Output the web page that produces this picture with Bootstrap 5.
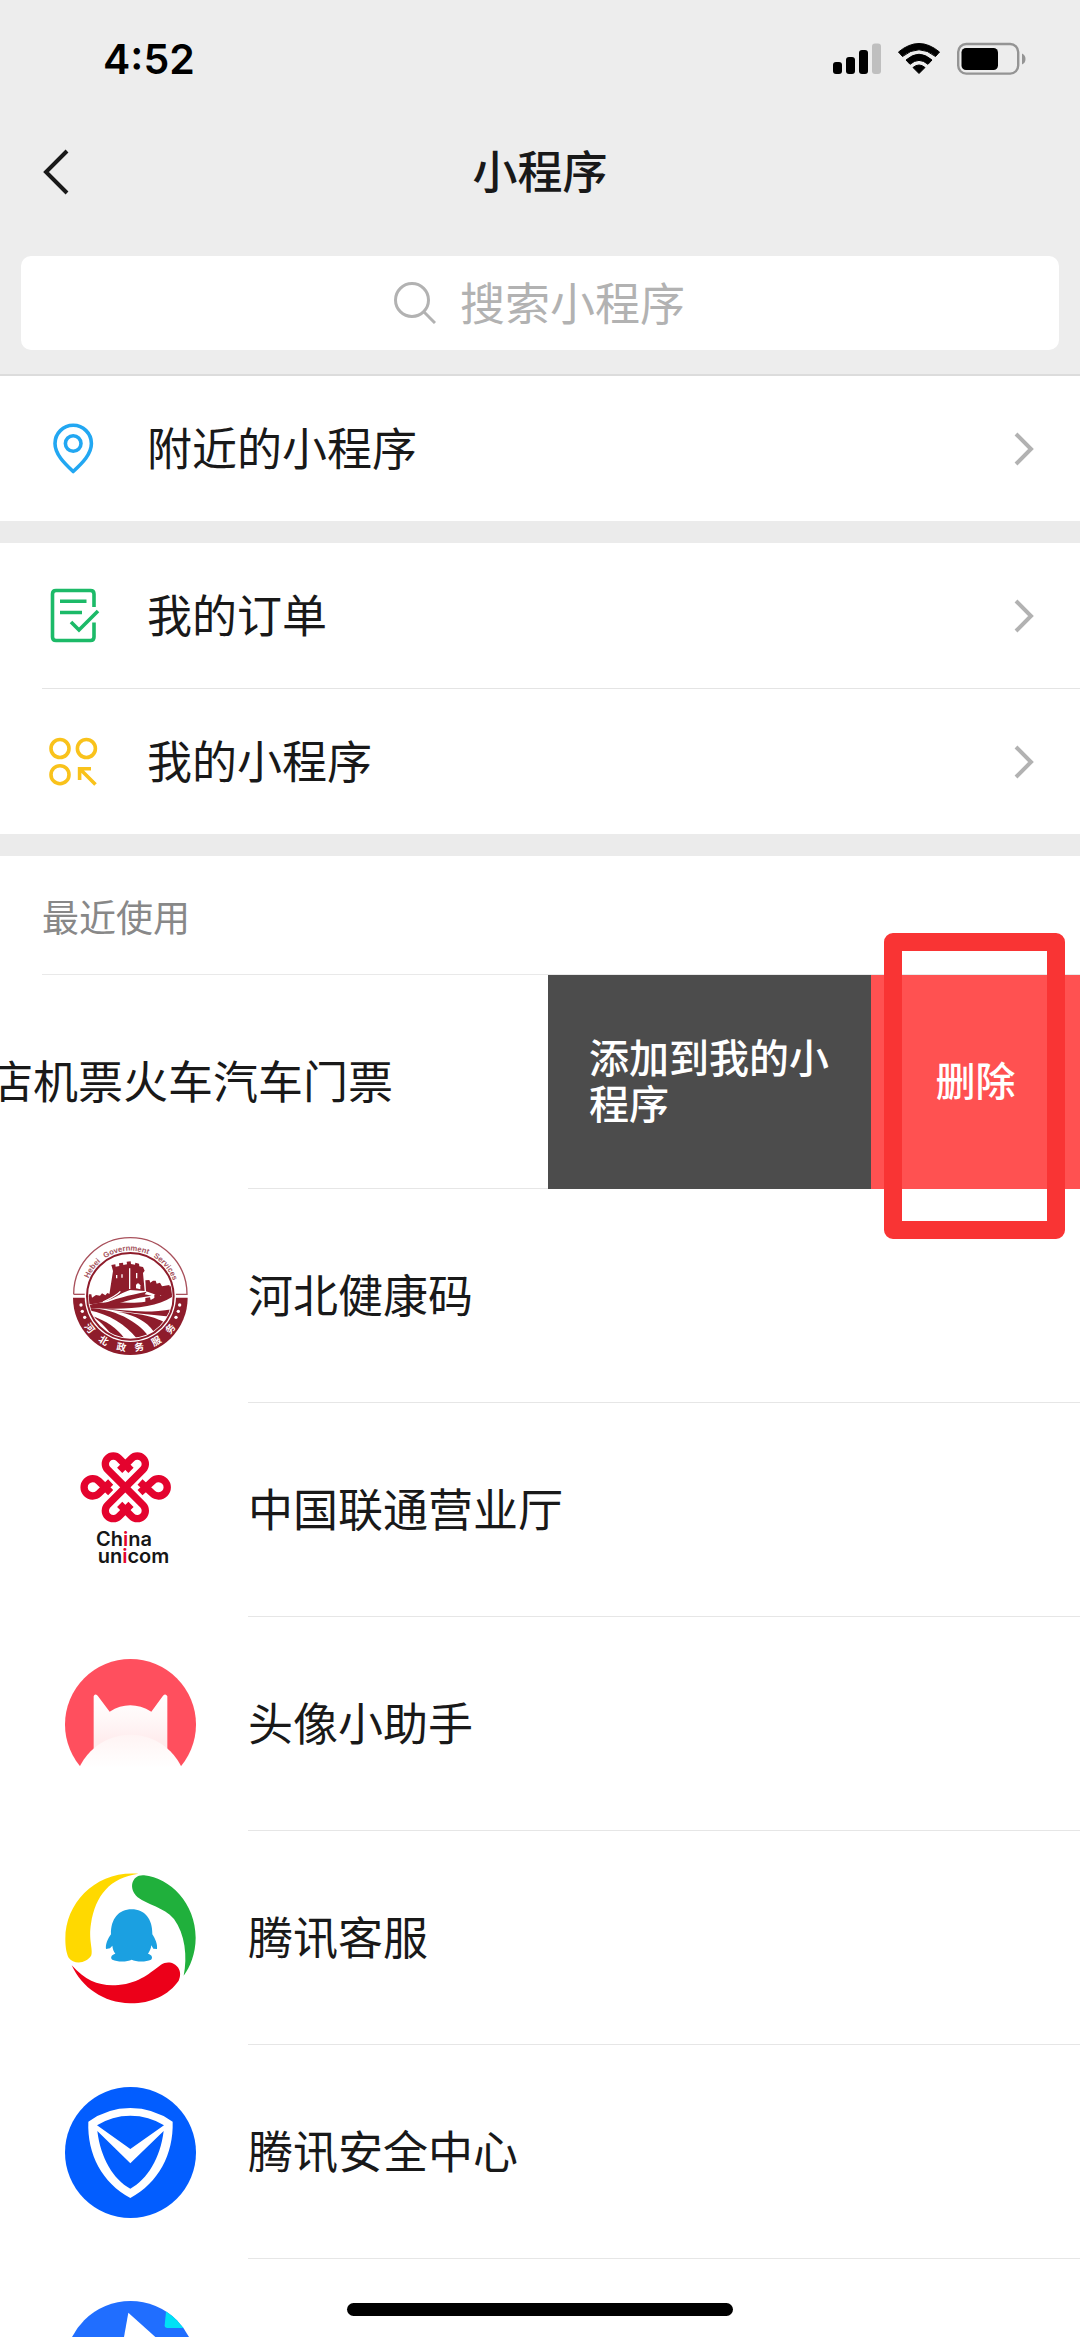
<!DOCTYPE html>
<html lang="zh-CN">
<head>
<meta charset="utf-8">
<meta name="viewport" content="width=device-width, initial-scale=1">
<title>小程序</title>
<link href="https://cdn.jsdelivr.net/npm/bootstrap@5.3.0/dist/css/bootstrap.min.css" rel="stylesheet">
<style>
  body { font-family: Inter, "Noto Sans CJK SC", sans-serif; font-size: 45px; line-height: 54px; color: #191919; background: #fff; }
  .screen { height: 100vh; }
  .top-area { background: #ededed; border-bottom: 2px solid #dcdcdc; height: 376px; }
  .status-bar { height: 118px; padding: 0 54px 0 103px; }
  .clock { font-size: 41px; font-weight: 600; color: #000; }
  .nav-row { height: 108px; padding-left: 42px; }
  .nav-row h1 { font-size: 45px; line-height: 54px; font-weight: 500; padding-top: 2px; }
  .search-wrap { padding: 30px 21px 0; }
  .search-box { height: 94px; border-radius: 10px; gap: 24px; cursor: text; }
  .search-box input { width: 226px; font-size: 45px; line-height: 54px; color: #191919; box-shadow: none; outline: 0; }
  .search-box input::placeholder { color: #b2b2b2; opacity: 1; }
  .menu-row { height: 145px; color: #191919; padding: 0 39px 0 42px; }
  .menu-row .menu-icon { width: 105px; }
  .menu-label, .app-name, .swipe-title { padding-top: 2px; }
  .menu-line { height: 1px; margin-left: 42px; background: #e4e4e4; }
  .band { height: 22px; background: #ebebeb; flex: none; }
  .recent-head { height: 119px; margin-left: 42px; padding-top: 8px; font-size: 37px; line-height: 44px; font-weight: 400; color: #888; border-bottom: 1px solid #e9e9e9; }
  .app-row { height: 214px; color: #191919; flex: none; }
  .app-icon { width: 248px; padding-left: 65px; flex: none; }
  .app-name { border-bottom: 1px solid #e6e6e6; }
  .swipe-title { padding-right: 155px; }
  .swipe-title::after { content: ""; position: absolute; left: 248px; right: 0; bottom: 0; border-bottom: 1px solid #e6e6e6; }
  .swipe-btn { border: 0; color: #fff; font-size: 40px; line-height: 46px; font-weight: 500; flex: none; }
  .btn-add { width: 323px; padding: 0 41px; background: #4c4c4c; }
  .btn-del { width: 209px; padding: 0; background: #ff5151; }
  .marker { right: 15px; top: -42px; width: 181px; height: 306px; border: 18px solid #f93434; border-radius: 9px; pointer-events: none; }
  .home-bar { left: 50%; bottom: 21px; width: 386px; height: 13px; margin-left: -193px; border-radius: 7px; background: #000; }
  svg { display: block; flex: none; }
</style>
</head>
<body>
<div class="screen d-flex flex-column overflow-hidden position-relative">
  <header class="top-area flex-shrink-0">
    <div class="status-bar d-flex align-items-center justify-content-between">
      <div class="clock">4:52</div>
      <svg width="194" height="34" viewBox="831 42 194 34" aria-hidden="true">
        <rect x="832" y="62" width="9" height="12" rx="3"/>
        <rect x="845" y="57" width="9" height="17" rx="3"/>
        <rect x="858" y="50" width="9" height="24" rx="3"/>
        <rect x="871" y="43.500" width="9" height="30.500" rx="3" fill="#bfbfbf"/>
        <path d="M897.500 52 Q918 35 938.500 52 L934.500 56.500 Q918 43 901.500 56.500 Z" stroke="#000" stroke-width="1" stroke-linejoin="round"/>
        <path d="M905 60 Q918 48.500 931 60 L927 64.300 Q918 56.500 909 64.300 Z" stroke="#000" stroke-width="1" stroke-linejoin="round"/>
        <path d="M912 67.500 Q918 62.500 924 67.500 L918 73.500 Z" stroke="#000" stroke-width="1" stroke-linejoin="round"/>
        <rect x="957.200" y="44" width="60" height="29.600" rx="8" fill="none" stroke="#949494" stroke-width="2.400"/>
        <rect x="960.500" y="48" width="36.500" height="22" rx="4.500"/>
        <path d="M1021 53.500 Q1024.500 55 1024.500 59 Q1024.500 63 1021 64.500 Z" fill="#949494"/>
      </svg>
    </div>
    <div class="nav-row d-flex align-items-center position-relative">
      <a href="#" aria-label="返回"><svg width="28" height="48" viewBox="0 0 28 48" fill="none" stroke="#191919" stroke-width="4"><path d="M25 3 L4 24 L25 45"/></svg></a>
      <h1 class="mb-0 position-absolute start-0 end-0 text-center pe-none">小程序</h1>
    </div>
    <div class="search-wrap">
      <label class="search-box bg-white d-flex align-items-center justify-content-center">
        <svg width="42" height="42" viewBox="0 0 42 42" fill="none" stroke="#b2b2b2" stroke-width="3"><circle cx="18" cy="18" r="16.500"/><path d="M29.500 29.500 L41 41"/></svg>
        <input class="border-0 px-0 pb-0 pt-1 bg-transparent" type="text" placeholder="搜索小程序" aria-label="搜索小程序">
      </label>
    </div>
  </header>

  <nav class="flex-shrink-0">
    <a href="#" class="menu-row d-flex align-items-center text-decoration-none">
      <span class="menu-icon"><svg width="62" height="62" viewBox="42 418 62 62" fill="none" stroke="#22a7f2" stroke-width="3.600" stroke-linejoin="round"><path d="M73.200 471.500 C64 463 55 454 55 443.500 A18.200 18.200 0 0 1 91.400 443.500 C91.400 454 82.500 463 73.200 471.500 Z"/><circle cx="73.200" cy="443.500" r="7.800"/></svg></span>
      <span class="menu-label flex-grow-1">附近的小程序</span>
      <svg width="27" height="38" viewBox="0 0 27 38" fill="none" stroke="#b2b2b2" stroke-width="4"><path d="M2 4 L17 19 L2 34"/></svg>
    </a>
    <div class="band"></div>
    <a href="#" class="menu-row d-flex align-items-center text-decoration-none">
      <span class="menu-icon"><svg width="62" height="62" viewBox="42 585 62 62" fill="none" stroke="#1cba68" stroke-width="3.600"><path d="M94 607 V594 Q94 590.500 90.500 590.500 H56 Q52.500 590.500 52.500 594 V637 Q52.500 640.500 56 640.500 H90.500 Q94 640.500 94 637 V622.500"/><path d="M60 601.300 H86.500 M60 612.500 H82 M71 622 L79 630 L98 611" stroke-linejoin="miter"/></svg></span>
      <span class="menu-label flex-grow-1">我的订单</span>
      <svg width="27" height="38" viewBox="0 0 27 38" fill="none" stroke="#b2b2b2" stroke-width="4"><path d="M2 4 L17 19 L2 34"/></svg>
    </a>
    <div class="menu-line"></div>
    <a href="#" class="menu-row d-flex align-items-center text-decoration-none">
      <span class="menu-icon"><svg width="62" height="62" viewBox="42 731 62 62" fill="none" stroke="#f9c21b" stroke-width="3.600"><circle cx="60" cy="748.500" r="9"/><circle cx="86.400" cy="748.500" r="9"/><circle cx="60" cy="774.700" r="9"/><path d="M91 768.700 H79.600 V780 M80 769 L95.500 784.500"/></svg></span>
      <span class="menu-label flex-grow-1">我的小程序</span>
      <svg width="27" height="38" viewBox="0 0 27 38" fill="none" stroke="#b2b2b2" stroke-width="4"><path d="M2 4 L17 19 L2 34"/></svg>
    </a>
    <div class="band"></div>
  </nav>

  <h2 class="recent-head d-flex align-items-center mb-0 flex-shrink-0">最近使用</h2>

  <div class="app-row d-flex position-relative">
    <div class="swipe-title flex-grow-1 d-flex align-items-center justify-content-end overflow-hidden position-relative text-nowrap"><span>店机票火车汽车门票</span></div>
    <button type="button" class="swipe-btn btn-add text-start">添加到我的小程序</button>
    <button type="button" class="swipe-btn btn-del text-center">删除</button>
    <div class="marker position-absolute"></div>
  </div>

  <a href="#" class="app-row d-flex text-decoration-none">
    <span class="app-icon d-flex align-items-center">
      <svg width="131" height="131" viewBox="45 32 393 393" aria-hidden="true">
        <g fill="#8e1c2b">
          <path d="M71 222 A170 170 0 0 1 411 222 H372" fill="none" stroke="#a8505b" stroke-width="4"/>
          <path d="M71 222 H110" stroke="#a8505b" stroke-width="4"/>
          <path d="M69 232 H413 A172 172 0 0 1 69 232 Z"/>
          <circle cx="241" cy="228" r="137" fill="#fff"/>
          <circle cx="241" cy="228" r="130" fill="#fff" stroke="#8e1c2b" stroke-width="6"/>
          <clipPath id="seal"><circle cx="241" cy="228" r="125"/></clipPath>
          <g clip-path="url(#seal)">
            <path d="M176 235 L189 152 L184 134 L196 132 L197 139 L208 137 L207 129 L219 127 L220 134 L231 132 L230 124 L242 123 L243 131 L255 133 L256 127 L267 130 L268 138 L279 140 L284 151 L279 158 L284 212 L240 209 L232 212 Z"/>
            <path d="M286 180 L298 179 L301 187 L309 181 L317 181 L320 190 L330 187 L336 198 L358 194 L366 224 L320 224 L288 213 Z"/>
            <path d="M112 222 L124 222 L126 232 L138 224 L150 226 L156 219 L166 225 L172 218 L181 222 L190 215 L226 208 C211 226 168 248 112 253 Z"/>
            <path d="M112 256 C170 236 230 254 286 244 L286 233 L300 231 L302 239 L313 233 L313 223 L328 216 L331 226 L344 218 L344 207 L366 194 L372 226 C318 263 231 270 112 262 Z"/>
            <path d="M150 254 C190 236 238 224 290 214 L284 222 L305 226 C252 233 217 244 190 256 Z"/>
            <path d="M114 263 C210 264 277 320 295 347 L260 354 C228 315 180 282 116 270 Z M125 286 C170 301 206 327 226 358 L190 350 C164 315 146 300 125 286 Z"/>
            <path d="M154 264 C224 270 291 281 369 266 L363 289 C296 283 226 276 154 264 Z M200 274 C276 286 302 319 317 341 L350 310 C323 292 282 280 200 274 Z"/>
            <path d="M239 144 V206 M211 213 C202 224 180 235 159 245 M260 158 V174 M200 164 V174 M216 162 V172" stroke="#fff" stroke-width="4" fill="none"/>
            <path d="M258 204 V194 Q264 183 271 195 V207 Z" fill="#fff"/>
          </g>
          <path id="seal-arc" d="M105 228 A136 136 0 0 1 377 228" transform="translate(0 -1)" fill="none"/>
          <g font-family="Liberation Sans, sans-serif" font-size="23" font-weight="700" text-anchor="middle" fill="#a5535d">
            <text><textPath href="#seal-arc" startOffset="20%">Hebei</textPath></text>
            <text><textPath href="#seal-arc" startOffset="47%">Government</textPath></text>
            <text><textPath href="#seal-arc" startOffset="78%">Services</textPath></text>
          </g>
          <g font-family="Noto Sans CJK SC, sans-serif" font-size="29" font-weight="700" text-anchor="middle" fill="#fff">
            <text x="241" y="393" transform="rotate(52 241 228)">河</text>
            <text x="241" y="393" transform="rotate(31 241 228)">北</text>
            <text x="241" y="393" transform="rotate(10 241 228)">政</text>
            <text x="241" y="393" transform="rotate(-10 241 228)">务</text>
            <text x="241" y="393" transform="rotate(-30 241 228)">服</text>
            <text x="241" y="393" transform="rotate(-51 241 228)">务</text>
          </g>
          <g fill="#fff"><circle cx="93" cy="254" r="5"/><circle cx="97" cy="273" r="5"/><circle cx="104" cy="291" r="5"/><circle cx="389" cy="254" r="5"/><circle cx="385" cy="273" r="5"/><circle cx="378" cy="291" r="5"/></g>
        </g>
      </svg>
    </span>
    <span class="app-name flex-grow-1 d-flex align-items-center">河北健康码</span>
  </a>

  <a href="#" class="app-row d-flex text-decoration-none">
    <span class="app-icon d-flex align-items-center">
      <svg width="131" height="131" viewBox="45 44 393 393" aria-hidden="true">
        <g fill="none" stroke="#e4032e" stroke-width="22">
          <path d="M243 120 L207 84 A24 24 0 0 0 173 118 L279 224 A24 24 0 0 1 245 258 L209 222"/>
          <path d="M209 120 L245 84 A24 24 0 0 1 279 118 L173 224 A24 24 0 0 0 207 258 L243 222"/>
          <path d="M182 187 L146 152 A26 26 0 1 0 146 190 L182 155"/>
          <path d="M270 187 L308 152 A26 26 0 1 1 308 190 L270 155"/>
        </g>
        <g font-family="Inter, sans-serif" font-weight="600" font-size="60" fill="#161616">
          <text x="138" y="347">Ch<tspan fill="#e4032e">i</tspan>na</text>
          <text x="143" y="398">un<tspan fill="#e4032e">i</tspan>com</text>
        </g>
      </svg>
    </span>
    <span class="app-name flex-grow-1 d-flex align-items-center">中国联通营业厅</span>
  </a>

  <a href="#" class="app-row d-flex text-decoration-none">
    <span class="app-icon d-flex align-items-center">
      <svg width="131" height="131" viewBox="45 56 393 393" aria-hidden="true">
        <defs>
          <linearGradient id="cat" x1="0" y1="0" x2="0" y2="1"><stop offset="0" stop-color="#fff"/><stop offset=".3" stop-color="#fff8f8"/><stop offset=".6" stop-color="#ffeced"/></linearGradient>
          <linearGradient id="belly" x1="0" y1="0" x2="0" y2="1"><stop offset="0" stop-color="#fff4f4"/><stop offset=".3" stop-color="#fff"/></linearGradient>
        </defs>
        <circle cx="241.500" cy="252.500" r="196.500" fill="#ff4f5e"/>
        <path d="M131 400 V168 Q134 158 143 166 L179 214 Q240 176 304 214 L339 166 Q347 158 352 168 V400 Z" fill="url(#cat)"/>
        <circle cx="241.500" cy="452" r="169" fill="url(#belly)"/>
      </svg>
    </span>
    <span class="app-name flex-grow-1 d-flex align-items-center">头像小助手</span>
  </a>

  <a href="#" class="app-row d-flex text-decoration-none">
    <span class="app-icon d-flex align-items-center">
      <svg width="131" height="131" viewBox="45 38 393 393" aria-hidden="true">
        <path fill="#ffd900" d="M265 40 C140 30 46 125 46 235 C46 262 50 280 56 292 C70 313 110 311 124 285 C129 262 115 240 123 190 C136 105 180 52 265 40 Z"/>
        <path fill="#20b03c" d="M282 45 C360 52 437 130 437 232 C437 280 420 320 401 346 C413 290 405 220 372 176 C340 140 295 135 263 111 C233 84 246 42 282 45 Z"/>
        <path fill="#ec0019" d="M65 315 C110 365 150 378 205 374 C270 368 302 335 333 313 C365 293 404 323 386 361 C356 405 300 430 240 429 C160 427 96 382 65 315 Z"/>
        <path fill="#1ba0e1" d="M245 147 C284 147 308 176 307 222 C316 236 323 252 321 266 L310 265 L304 255 C303 265 299 273 294 280 C306 284 309 291 303 298 C286 306 257 304 245 298 C233 304 204 306 187 298 C180 291 184 284 196 280 C191 273 188 266 187 256 L180 264 L168 266 C166 252 173 236 183 222 C182 176 206 147 245 147 Z"/>
      </svg>
    </span>
    <span class="app-name flex-grow-1 d-flex align-items-center">腾讯客服</span>
  </a>

  <a href="#" class="app-row d-flex text-decoration-none">
    <span class="app-icon d-flex align-items-center">
      <svg width="131" height="131" viewBox="45 48 393 393" aria-hidden="true">
        <circle cx="241.500" cy="244.500" r="196.500" fill="#025dff"/>
        <path fill="#fff" fill-rule="evenodd" d="M241 111 Q310 111 368 152 C371 250 325 335 241 381 C157 335 111 250 115 152 Q172 111 241 111 Z M241 134 Q186 134 141 163 L241 234 L342 163 Q297 134 241 134 Z M142 180 C152 262 190 325 241 353 C292 325 331 262 341 180 L241 277 Z"/>
      </svg>
    </span>
    <span class="app-name flex-grow-1 d-flex align-items-center">腾讯安全中心</span>
  </a>

  <a href="#" class="app-row d-flex text-decoration-none" aria-label="小程序">
    <span class="app-icon d-flex align-items-center">
      <svg width="131" height="131" viewBox="45 692 393 393" aria-hidden="true">
        <clipPath id="last-clip"><circle cx="241.500" cy="888.500" r="196.500"/></clipPath>
        <g clip-path="url(#last-clip)">
          <rect x="45" y="692" width="393" height="393" fill="#206eff"/>
          <path d="M235 727 L335 817 L219 817 Z" fill="#fff"/>
          <path d="M349 715 H440 V773 H352 Q344 773 344 765 Z" fill="#00e1f5"/>
        </g>
      </svg>
    </span>
  </a>

  <div class="home-bar position-absolute"></div>
</div>
<script src="https://cdn.jsdelivr.net/npm/bootstrap@5.3.0/dist/js/bootstrap.bundle.min.js"></script>
</body>
</html>
